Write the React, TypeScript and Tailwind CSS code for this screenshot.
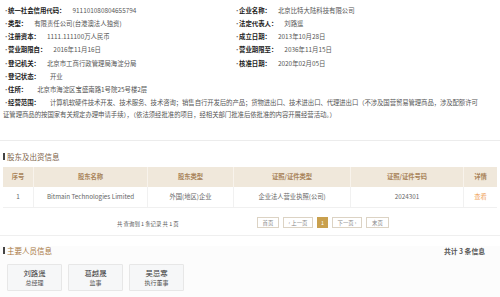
import React from "react";

const F = { fontFamily: '"Noto Sans CJK SC", "Noto Sans", sans-serif' };

function Item({ label, value, gap = 7 }: { label: string; value: string; gap?: number }) {
  return (
    <div className="flex items-center whitespace-nowrap">
      <span className="w-[5px] text-[#666] text-center">·</span>
      <span className="font-semibold text-[#222]">{label}</span>
      <span className="text-[#555]" style={{ marginLeft: gap }}>{value}</span>
    </div>
  );
}

const cols = "grid grid-cols-[30px_114px_86px_117px_113px_34px]";

export default function App() {
  const left = [
    ["统一社会信用代码：", "911101080804655794"],
    ["类型：", "有限责任公司(台港澳法人独资)"],
    ["注册资本：", "1111.111100万人民币"],
    ["营业期限自：", "2016年11月16日"],
    ["登记机关：", "北京市工商行政管理局海淀分局"],
  ];
  const right = [
    ["企业名称：", "北京比特大陆科技有限公司"],
    ["法定代表人：", "刘路遥"],
    ["成立日期：", "2013年10月28日"],
    ["营业期限至：", "2036年11月15日"],
    ["核准日期：", "2020年02月05日"],
  ];
  const headers = ["序号", "股东名称", "股东类型", "证照/证件类型", "证照/证件号码", "详情"];
  const row = ["1", "Bitmain Technologies Limited", "外国(地区)企业", "企业法人营业执照(公司)", "2024301"];
  const people = [
    ["刘路遥", "总经理"],
    ["葛越晟", "监事"],
    ["吴忌寒", "执行董事"],
  ];
  return (
    <div style={F} className="w-[500px] h-[297px] overflow-hidden bg-white">
      {/* basic info */}
      <div className="pl-[3px] pt-[3.5px] pb-[18px] text-[6.4px] leading-[13.25px] border-b border-[#ececec]">
        <div className="grid grid-cols-[231px_1fr]">
          <div>
            {left.map(([l, v]) => (
              <Item key={l} label={l} value={v} />
            ))}
          </div>
          <div>
            {right.map(([l, v]) => (
              <Item key={l} label={l} value={v} />
            ))}
          </div>
        </div>
        <Item label="登记状态：" value="开业" gap={10} />
        <Item label="住所：" value="北京市海淀区宝盛南路1号院25号楼2层" gap={10} />
        <div className="text-[#555] leading-[12.5px] mt-[0.5px]">
          <div className="whitespace-nowrap flex items-center">
            <span className="w-[5px] text-[#666] text-center">·</span>
            <span className="font-semibold text-[#222]">经营范围：</span>
            <span className="ml-[10px] tracking-[-0.1px]">计算机软硬件技术开发、技术服务、技术咨询；销售自行开发后的产品；货物进出口、技术进出口、代理进出口（不涉及国营贸易管理商品，涉及配额许可</span>
          </div>
          <div className="whitespace-nowrap tracking-[-0.05px]">证管理商品的按国家有关规定办理申请手续），（依法须经批准的项目，经相关部门批准后依批准的内容开展经营活动。）</div>
        </div>
      </div>

      {/* shareholders */}
      <div className="px-[3px] pb-[6px] border-b border-[#efefef]">
        <div className="flex items-center h-[10px] mt-[11px]">
          <span className="w-[2px] h-[7px] bg-[#444] mr-[2px]" />
          <span className="text-[7.5px] text-[#7d6248]">股东及出资信息</span>
        </div>
        <div className="mt-[5px] text-[6.3px]">
          <div className={`${cols} h-[20px] bg-[#f0e8db] text-[#a9845a] font-semibold`}>
            {headers.map((h, i) => (
              <div key={h} className={`flex items-center justify-center ${i > 0 ? "border-l border-[#f8f3ec]" : ""}`}>
                {h}
              </div>
            ))}
          </div>
          <div className={`${cols} h-[21px] bg-white text-[#666] border-b border-[#f0f0f0]`}>
            {row.map((c, i) => (
              <div key={i} className={`flex items-center justify-center ${i > 0 ? "border-l border-[#f1f1f1]" : ""}`}>
                {c}
              </div>
            ))}
            <div className="flex items-center justify-center border-l border-[#f1f1f1] text-[#f0a661]">查看</div>
          </div>
        </div>
        <div className="flex items-center h-[12px] mt-[9px]">
          <div className="w-[254px] pl-[114px] text-[5.4px] text-[#555] pt-[2px]">共 查询到 1 条记录 共 1 页</div>
          <div className="flex items-center gap-[4px] text-[5.4px] text-[#888]">
            <span className="w-[22px] h-[11px] border border-[#dcd3c4] flex items-center justify-center">首页</span>
            <span className="w-[30px] h-[11px] border border-[#dcd3c4] flex items-center justify-center">‹ 上一页</span>
            <span className="w-[11px] h-[11px] bg-[#c9a04e] text-white flex items-center justify-center">1</span>
            <span className="w-[30px] h-[11px] border border-[#dcd3c4] flex items-center justify-center">下一页 ›</span>
            <span className="w-[23px] h-[11px] border border-[#dcd3c4] flex items-center justify-center">末页</span>
          </div>
        </div>
      </div>

      {/* people */}
      <div className="px-[3px] bg-[#fcfcfc] h-full">
        <div className="flex items-center justify-between h-[10px] pt-[0px] mt-[10px]">
          <div className="flex items-center">
            <span className="w-[2px] h-[7px] bg-[#444] mr-[2px]" />
            <span className="text-[7.5px] text-[#a8773f]">主要人员信息</span>
          </div>
          <span className="text-[6.8px] text-[#555] font-semibold mr-[12px]">共计 3 条信息</span>
        </div>
        <div className="flex gap-[6px] mt-[8px] pl-[4px]">
          {people.map(([n, r]) => (
            <div key={n} className="w-[55px] h-[27px] bg-[#f6f7f8] border border-[#e7e7e7] rounded-[1px] flex flex-col items-center justify-center">
              <span className="text-[7.4px] leading-[10px] text-[#333]">{n}</span>
              <span className="text-[6px] leading-[9px] text-[#555]">{r}</span>
            </div>
          ))}
        </div>
      </div>
    </div>
  );
}
